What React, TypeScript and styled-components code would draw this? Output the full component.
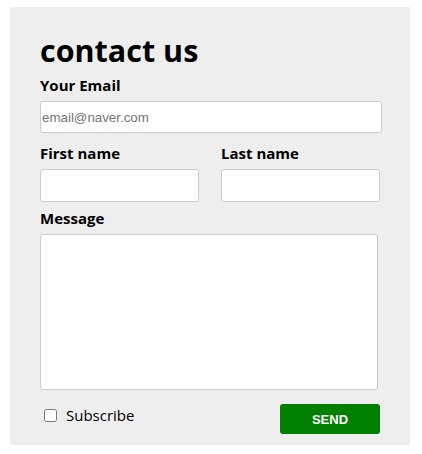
import React from "react";
import styled, { createGlobalStyle } from "styled-components";

const GlobalStyle = createGlobalStyle`
  body {
    margin: 0;
    background: #fff;
    font-family: "Open Sans", "Noto Sans", sans-serif;
  }
`;

const Panel = styled.form`
  box-sizing: border-box;
  width: 400px;
  height: 438px;
  margin: 7px 0 0 10px;
  padding: 23px 30px 0 30px;
  background: #eeeeee;
  display: flex;
  flex-direction: column;
`;

const Title = styled.h1`
  margin: 0;
  font-size: 30.5px;
  line-height: 40px;
  font-weight: 700;
  color: #000;
`;

const Label = styled.label`
  display: block;
  font-size: 15px;
  line-height: 22px;
  font-weight: 700;
  color: #000;
  margin-bottom: 5px;
`;

const Field = styled.div<{ $top?: number }>`
  display: flex;
  flex-direction: column;
  margin-top: ${(p) => p.$top ?? 0}px;
`;

const Input = styled.input<{ $width: number }>`
  box-sizing: border-box;
  width: ${(p) => p.$width}px;
  height: ${(p) => (p.$width > 200 ? 32 : 33)}px;
  padding: 0 1px;
  border: 1px solid #cccccc;
  border-radius: 3px;
  background: #fff;
  font-family: "Liberation Sans", Arial, sans-serif;
  font-size: 13.33px;
  outline: none;

  &::placeholder {
    color: #757575;
  }
`;

const Row = styled.div`
  display: flex;
  gap: 22px;
  margin-top: 9px;
`;

const TextArea = styled.textarea`
  box-sizing: border-box;
  width: 338px;
  height: 156px;
  border: 1px solid #cccccc;
  border-radius: 3px;
  background: #fff;
  resize: none;
  outline: none;
`;

const Footer = styled.div`
  display: flex;
  justify-content: space-between;
  align-items: flex-start;
  margin-top: 14px;
`;

const Check = styled.label`
  display: flex;
  align-items: center;
  gap: 9px;
  padding: 1px 0 0 4px;
  font-size: 15px;
  line-height: 20px;
  color: #000;

  input {
    margin: 0;
    width: 13px;
    height: 13px;
  }
`;

const SendButton = styled.button`
  width: 100px;
  height: 30px;
  border: none;
  border-radius: 3px;
  background: #008000;
  color: #fff;
  font-family: "Liberation Sans", Arial, sans-serif;
  font-size: 13px;
  font-weight: 700;
  cursor: pointer;
`;

export default function App() {
  return (
    <>
      <GlobalStyle />
      <Panel onSubmit={(e) => e.preventDefault()}>
        <Title>contact us</Title>
        <Field $top={4}>
          <Label>Your Email</Label>
          <Input $width={342} type="email" placeholder="email@naver.com" />
        </Field>
        <Row>
          <Field>
            <Label>First name</Label>
            <Input $width={159} type="text" />
          </Field>
          <Field>
            <Label>Last name</Label>
            <Input $width={159} type="text" />
          </Field>
        </Row>
        <Field $top={5}>
          <Label>Message</Label>
          <TextArea />
        </Field>
        <Footer>
          <Check>
            <input type="checkbox" />
            Subscribe
          </Check>
          <SendButton type="submit">SEND</SendButton>
        </Footer>
      </Panel>
    </>
  );
}
